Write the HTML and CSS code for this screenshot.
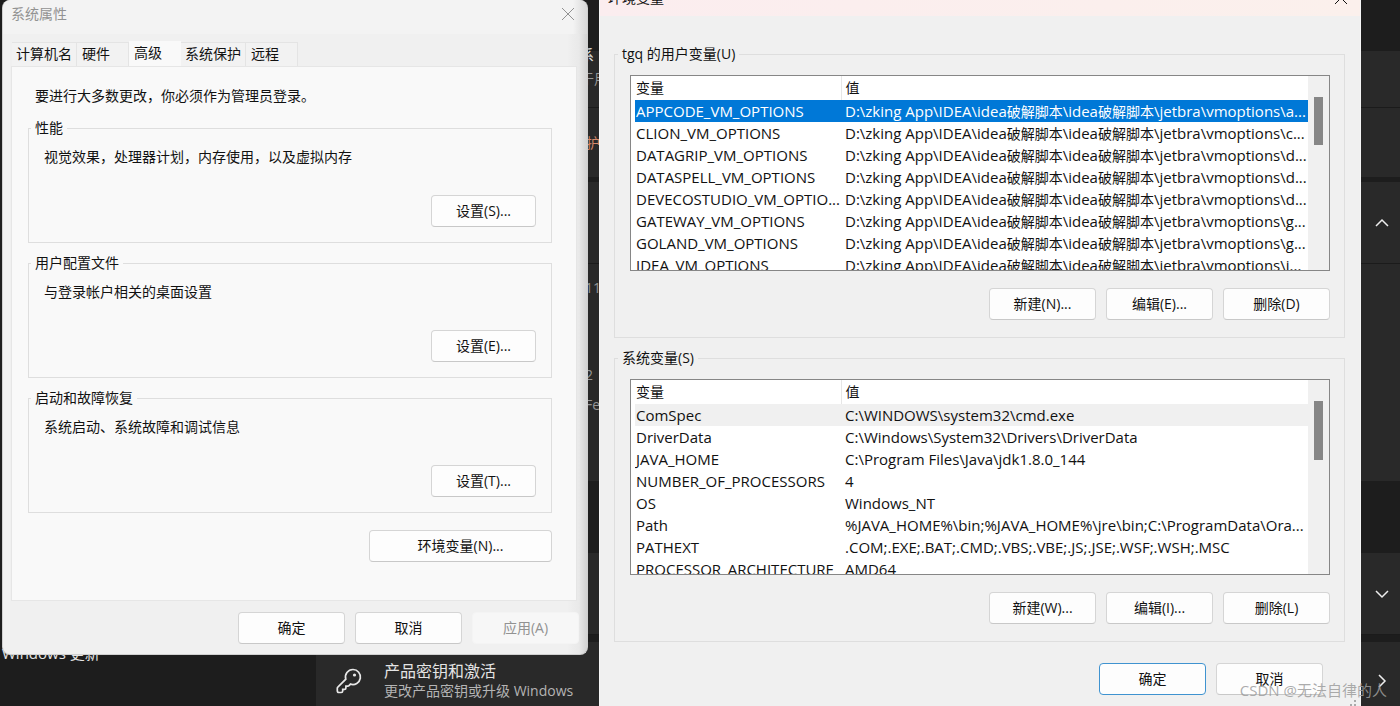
FILE: index.html
```html
<!DOCTYPE html>
<html lang="zh-CN">
<head>
<meta charset="utf-8">
<title>系统属性</title>
<link rel="stylesheet" href="styles.css">
</head>
<body>
<div class="desktop">
  <div class="settings">
    <nav class="settings-nav"><a class="nav-link" href="#update">Windows 更新</a></nav>
    <main class="settings-main">
      <section class="card">
        <div class="card-row row-edition"><span class="clip-text">系</span><span class="clip-text dim">于用</span></div>
        <div class="card-row row-protect"><span class="clip-text warn">护</span></div>
      </section>
      <section class="card">
        <div class="card-head"><svg class="chevron" viewBox="0 0 14 14"><path d="M1 10l6-6 6 6"/></svg></div>
        <div class="card-body"><span class="clip-text dim">11</span><span class="clip-text dim spaced">2</span><span class="clip-text dim">Fe</span></div>
      </section>
      <section class="card lone"><div class="card-head"><svg class="chevron" viewBox="0 0 14 14"><path d="M1 4l6 6 6-6"/></svg></div></section>
      <section class="card">
        <a class="card-head key-link" href="#activation">
          <svg class="key" viewBox="0 0 26 26"><path d="M17 1.500a7.500 7.500 0 0 0-7.200 9.700L1.800 19.200a1.500 1.500 0 0 0-.5 1.100v2.500c0 1 .7 1.700 1.700 1.700h2.200c.9 0 1.500-.7 1.500-1.500v-1.600h1.700c.9 0 1.500-.6 1.500-1.500v-1.800h1.900c.5 0 .9-.2 1.200-.5l1.500-1.500A7.500 7.500 0 1 0 17 1.500z"/><circle class="key-dot" cx="18.500" cy="7" r="1.600"/></svg>
          <span class="key-text"><span class="key-title">产品密钥和激活</span><span class="key-sub">更改产品密钥或升级 Windows</span></span>
          <svg class="chevron" viewBox="0 0 14 14"><path d="M4 1l6 6-6 6"/></svg>
        </a>
      </section>
    </main>
  </div>

  <div class="windows">
    <section class="window props">
      <header class="titlebar"><h1 class="title">系统属性</h1><button class="close" aria-label="关闭"><svg class="cross" viewBox="0 0 14 14"><path d="M1 1l12 12M13 1L1 13"/></svg></button></header>
      <div class="props-body">
        <div class="tabs" role="tablist">
          <button class="tab wide" role="tab">计算机名</button>
          <button class="tab" role="tab">硬件</button>
          <button class="tab active" role="tab" aria-selected="true">高级</button>
          <button class="tab wide" role="tab">系统保护</button>
          <button class="tab" role="tab">远程</button>
        </div>
        <div class="tab-page" role="tabpanel">
          <p class="intro">要进行大多数更改，你必须作为管理员登录。</p>
          <fieldset class="group"><legend class="legend">性能</legend><p class="desc">视觉效果，处理器计划，内存使用，以及虚拟内存</p><button class="btn">设置(S)...</button></fieldset>
          <fieldset class="group"><legend class="legend">用户配置文件</legend><p class="desc">与登录帐户相关的桌面设置</p><button class="btn">设置(E)...</button></fieldset>
          <fieldset class="group"><legend class="legend">启动和故障恢复</legend><p class="desc">系统启动、系统故障和调试信息</p><button class="btn">设置(T)...</button></fieldset>
          <button class="btn env-btn">环境变量(N)...</button>
        </div>
        <footer class="actions"><button class="btn">确定</button><button class="btn">取消</button><button class="btn" disabled>应用(A)</button></footer>
      </div>
    </section>

    <section class="window env">
      <header class="titlebar"><h1 class="title">环境变量</h1><button class="close" aria-label="关闭"><svg class="cross" viewBox="0 0 14 14"><path d="M1 1l12 12M13 1L1 13"/></svg></button></header>
      <div class="env-body">
        <fieldset class="group">
          <legend class="legend">tgq 的用户变量(U)</legend>
          <div class="list">
            <table class="vars">
              <thead><tr><th class="name">变量</th><th>值</th></tr></thead>
              <tbody>
                <tr class="selected"><td>APPCODE_VM_OPTIONS</td><td>D:\zking App\IDEA\idea<span class="han">破解脚本</span>\idea<span class="han">破解脚本</span>\jetbra\vmoptions\a...</td></tr>
                <tr><td>CLION_VM_OPTIONS</td><td>D:\zking App\IDEA\idea<span class="han">破解脚本</span>\idea<span class="han">破解脚本</span>\jetbra\vmoptions\c...</td></tr>
                <tr><td>DATAGRIP_VM_OPTIONS</td><td>D:\zking App\IDEA\idea<span class="han">破解脚本</span>\idea<span class="han">破解脚本</span>\jetbra\vmoptions\d...</td></tr>
                <tr><td>DATASPELL_VM_OPTIONS</td><td>D:\zking App\IDEA\idea<span class="han">破解脚本</span>\idea<span class="han">破解脚本</span>\jetbra\vmoptions\d...</td></tr>
                <tr><td>DEVECOSTUDIO_VM_OPTIO...</td><td>D:\zking App\IDEA\idea<span class="han">破解脚本</span>\idea<span class="han">破解脚本</span>\jetbra\vmoptions\d...</td></tr>
                <tr><td>GATEWAY_VM_OPTIONS</td><td>D:\zking App\IDEA\idea<span class="han">破解脚本</span>\idea<span class="han">破解脚本</span>\jetbra\vmoptions\g...</td></tr>
                <tr><td>GOLAND_VM_OPTIONS</td><td>D:\zking App\IDEA\idea<span class="han">破解脚本</span>\idea<span class="han">破解脚本</span>\jetbra\vmoptions\g...</td></tr>
                <tr><td>IDEA_VM_OPTIONS</td><td>D:\zking App\IDEA\idea<span class="han">破解脚本</span>\idea<span class="han">破解脚本</span>\jetbra\vmoptions\i...</td></tr>
              </tbody>
            </table>
            <div class="scrollbar"><div class="thumb"></div></div>
          </div>
          <div class="row-buttons"><button class="btn">新建(N)...</button><button class="btn">编辑(E)...</button><button class="btn">删除(D)</button></div>
        </fieldset>
        <fieldset class="group">
          <legend class="legend">系统变量(S)</legend>
          <div class="list">
            <table class="vars">
              <thead><tr><th class="name">变量</th><th>值</th></tr></thead>
              <tbody>
                <tr class="focused"><td>ComSpec</td><td>C:\WINDOWS\system32\cmd.exe</td></tr>
                <tr><td>DriverData</td><td>C:\Windows\System32\Drivers\DriverData</td></tr>
                <tr><td>JAVA_HOME</td><td>C:\Program Files\Java\jdk1.8.0_144</td></tr>
                <tr><td>NUMBER_OF_PROCESSORS</td><td>4</td></tr>
                <tr><td>OS</td><td>Windows_NT</td></tr>
                <tr><td>Path</td><td>%JAVA_HOME%\bin;%JAVA_HOME%\jre\bin;C:\ProgramData\Ora...</td></tr>
                <tr><td>PATHEXT</td><td>.COM;.EXE;.BAT;.CMD;.VBS;.VBE;.JS;.JSE;.WSF;.WSH;.MSC</td></tr>
                <tr><td>PROCESSOR_ARCHITECTURE</td><td>AMD64</td></tr>
              </tbody>
            </table>
            <div class="scrollbar"><div class="thumb long"></div></div>
          </div>
          <div class="row-buttons"><button class="btn">新建(W)...</button><button class="btn">编辑(I)...</button><button class="btn">删除(L)</button></div>
        </fieldset>
        <footer class="actions"><button class="btn default">确定</button><button class="btn">取消</button></footer>
      </div>
      <svg class="grip" viewBox="0 0 12 6"><path d="M8 0h2v2h-2zM4 4h2v2h-2zM8 4h2v2h-2z"/></svg>
    </section>
  </div>
  <span class="watermark">CSDN @无法自律的人</span>
</div>
</body>
</html>
```

FILE: styles.css
```css
* { box-sizing: border-box; }
body, p, h1, fieldset, button { margin: 0; }
body {
  font-family: "Open Sans", "Noto Sans CJK SC", sans-serif;
  font-size: 14px;
  line-height: 20px;
  color: #111;
}
button { font: inherit; color: inherit; padding: 0; }
a { color: inherit; text-decoration: none; }

.desktop { position: relative; height: 100vh; overflow: hidden; background: #1d1d1d; }

/* Settings app behind the dialogs */
.settings { position: absolute; inset: 0; display: flex; color: #e4e4e4; }
.settings-nav { flex: 0 0 316px; padding: 643px 0 0 2px; }
.nav-link { font-size: 15px; }
.settings-main { flex: 1; min-width: 0; padding-top: 51px; display: flex; flex-direction: column; gap: 5px; }
.card { background: #292929; flex: none; }
.card-row { display: flex; flex-direction: column; padding-left: 264px; }
.row-edition { height: 57px; padding-bottom: 18px; justify-content: flex-end; gap: 4px; border-bottom: 1px solid #1b1b1b; }
.row-protect { height: 69px; justify-content: center; padding-left: 270px; }
.card-head { display: flex; align-items: center; justify-content: flex-end; height: 82px; padding-right: 11px; border-bottom: 1px solid #1b1b1b; }
.card-body { height: 217px; padding: 14px 0 0 269px; display: flex; flex-direction: column; gap: 10px; }
.lone { margin: 67px 0 2px; }
.dim { color: #969696; }
.warn { color: #d58a6c; }
.spaced { margin-top: 57px; }
.chevron { width: 14px; height: 14px; fill: none; stroke: #eee; stroke-width: 1.500; }
.key-link { gap: 22px; padding-left: 20px; height: 79px; }
.key { width: 26px; height: 26px; fill: none; stroke: #e8e8e8; stroke-width: 1.700; }
.key-dot { fill: #e8e8e8; stroke: none; }
.key-text { flex: 1; display: flex; flex-direction: column; }
.key-title { font-size: 16px; }
.key-sub { color: #b4b4b4; }

/* Dialog windows */
.windows {
  position: relative;
  display: grid;
  grid-template-columns: minmax(0, 586fr) minmax(0, 762fr);
  column-gap: 11px;
  align-items: start;
  padding: 0 39px 0 2px;
}
.window { background: #f0f0f0; border: 1px solid #f6f6f6; }
.titlebar { display: flex; align-items: center; justify-content: space-between; height: 34px; }
.title { font-size: 14px; font-weight: 400; }
.close { display: flex; border: 0; background: none; }
.cross { width: 14px; height: 14px; fill: none; stroke: currentColor; stroke-width: 1; }

.group { min-width: 0; border: 1px solid #dedede; }
.legend { padding: 0 4px; }
.btn {
  height: 32px;
  min-width: 107px;
  background: #fdfdfd;
  border: 1px solid #d5d5d5;
  border-bottom-color: #c8c8c8;
  border-radius: 4px;
}
.btn:disabled { color: #929292; background: #f7f7f7; border-color: #f4f4f4; }
.btn.default { border-color: #3f93d0; }
.actions { display: flex; justify-content: flex-end; gap: 10px; }

/* System properties */
.props {
  border-top: 0;
  border-color: #d0d0d0;
  border-radius: 8px;
  background: linear-gradient(to left, #d2d2d2, #e9e9e9 8px, #f0f0f0 20px);
}
.props .titlebar { color: #929292; padding: 0 12px 6px 8px; border-radius: 8px 8px 0 0; background: linear-gradient(to left, #d8d8d8, #f3f3f3 14px); }
.props-body { padding: 7px 8px 10px; }
.tabs { display: flex; align-items: flex-end; padding-left: 1px; }
.tab { width: 52px; height: 24px; padding: 0 0 2px 5px; text-align: left; background: #f2f2f2; border: 1px solid #e4e4e4; border-width: 1px 1px 0 0; }
.tab.wide { width: 65px; padding-left: 4px; }
.tab.active { background: #f9f9f9; height: 25px; padding-bottom: 3px; border-color: #f9f9f9; }
.tab-page { display: flex; flex-direction: column; gap: 10px; margin-right: 2px; padding: 19px 24px 38px 16px; background: #f9f9f9; border: 1px solid #e6e6e6; }
.intro { padding: 0 0 2px 7px; }
.props .group { display: flex; flex-direction: column; align-items: flex-end; padding: 9px 15px 15px; }
.props .legend { margin-left: -13px; }
.desc { align-self: stretch; margin-bottom: 28px; }
.group > .btn { min-width: 105px; }
.env-btn { align-self: flex-end; width: 183px; margin-top: 7px; }
.props .actions { padding-top: 11px; }

/* Environment variables */
.env { margin-top: -18px; border-width: 0 1px; min-height: calc(100vh + 18px); position: relative; }
.env .titlebar { padding: 0 12px 2px 8px; background: linear-gradient(to right, #fbedef, #fbf0ec); }
.env-body { padding: 28px 15px 0 14px; display: flex; flex-direction: column; gap: 10px; }
.env .group { padding: 11px 14px 17px 15px; }
.env .legend { margin-left: -12px; }
.list { display: flex; height: 196px; overflow: hidden; background: #fff; border: 1px solid #868686; padding-left: 4px; }
.vars { flex: 1; min-width: 0; table-layout: fixed; border-collapse: collapse; align-self: flex-start; }
.vars th { height: 24px; padding: 0 0 0 1px; font-weight: 400; text-align: left; }
.vars .name { width: 206px; border-right: 1px solid #e6e6e6; }
.vars td { height: 22px; padding: 0 0 0 1px; font-size: 15px; white-space: nowrap; overflow: hidden; }
.vars th + th, .vars td + td { padding-left: 4px; }
.han { font-size: 14px; }
.selected { background: #0078d7; color: #fff; }
.focused { background: #f0f0f0; }
.scrollbar { width: 21px; padding: 21px 6px 0; background: #f0f0f0; }
.thumb { height: 48px; background: #868686; }
.thumb.long { height: 59px; }
.row-buttons { display: flex; justify-content: flex-end; gap: 10px; margin-top: 17px; }
.env .actions { padding: 11px 22px 0 0; }
.grip { position: absolute; right: 2px; bottom: 0; width: 12px; height: 6px; fill: #aaa; }

.watermark { position: absolute; right: 13px; bottom: 6px; font-size: 15px; color: #9c9c9cd9; }
```
